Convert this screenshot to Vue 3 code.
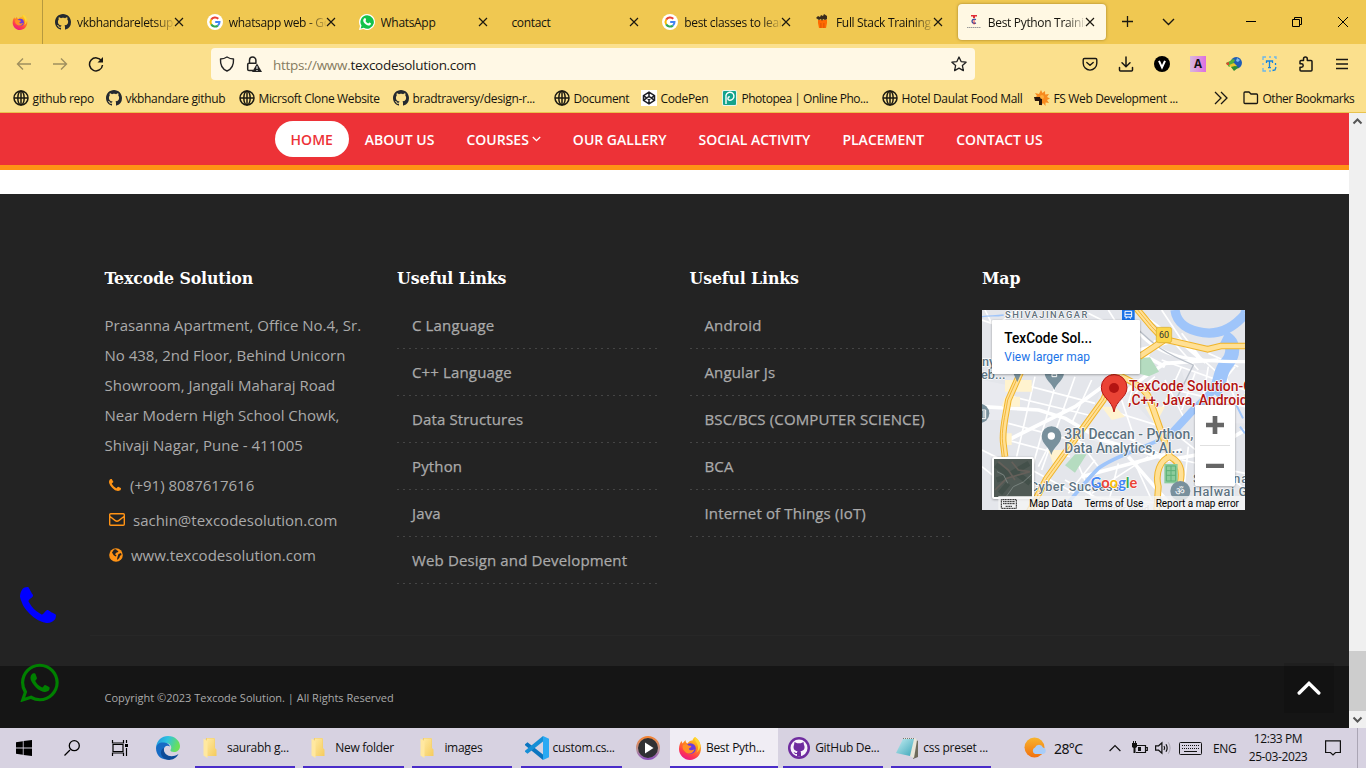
<script setup>
const tabs = [
  { icon: 'github', title: 'vkbhandareletsupgrade', fade: true },
  { icon: 'google', title: 'whatsapp web - Google', fade: true },
  { icon: 'whatsapp-app', title: 'WhatsApp' },
  { icon: '', title: 'contact' },
  { icon: 'google', title: 'best classes to learn full', fade: true },
  { icon: 'fullstack', title: 'Full Stack Training in', fade: true },
  { icon: 'texcode', title: 'Best Python Training', fade: true, active: true },
]
const tools = ['pocket', 'download', 'vee', 'letter-a', 'idm', 'text-scan', 'puzzle', 'menu']
const bookmarks = [
  { icon: 'globe', title: 'github repo' },
  { icon: 'github', title: 'vkbhandare github' },
  { icon: 'globe', title: 'Micrsoft Clone Website' },
  { icon: 'github', title: 'bradtraversy/design-r...' },
  { icon: 'globe', title: 'Document' },
  { icon: 'codepen', title: 'CodePen' },
  { icon: 'photopea', title: 'Photopea | Online Pho...' },
  { icon: 'globe', title: 'Hotel Daulat Food Mall' },
  { icon: 'spark', title: 'FS Web Development ...' },
]
const nav = ['HOME', 'ABOUT US', 'COURSES', 'OUR GALLERY', 'SOCIAL ACTIVITY', 'PLACEMENT', 'CONTACT US']
const linksA = ['C Language', 'C++ Language', 'Data Structures', 'Python', 'Java', 'Web Design and Development']
const linksB = ['Android', 'Angular Js', 'BSC/BCS (COMPUTER SCIENCE)', 'BCA', 'Internet of Things (IoT)']
const tasks = [
  { icon: 'folder-win', title: 'saurabh g...' },
  { icon: 'folder-win', title: 'New folder' },
  { icon: 'folder-win', title: 'images' },
  { icon: 'vscode', title: 'custom.cs...' },
  { icon: 'media', title: '' },
  { icon: 'firefox', title: 'Best Pyth...', active: true },
  { icon: 'ghdesktop', title: 'GitHub De...' },
  { icon: 'notepad', title: 'css preset ...' },
]
</script>

<template>
  <div class="screen">
    <svg class="defs" width="0" height="0" aria-hidden="true">
      <defs>
        <linearGradient id="ffg" x1=".8" y1="0" x2=".3" y2="1"><stop offset="0" stop-color="#ffe227" /><stop offset=".4" stop-color="#ff8a1c" /><stop offset=".75" stop-color="#ff3750" /><stop offset="1" stop-color="#e8178a" /></linearGradient>
        <linearGradient id="edgeg" x1="0" y1="0" x2="1" y2=".3"><stop offset="0" stop-color="#1d8fe0" /><stop offset=".5" stop-color="#2fc3df" /><stop offset="1" stop-color="#69e05a" /></linearGradient>
        <linearGradient id="foldg" x1="0" y1="0" x2="1" y2="1"><stop offset="0" stop-color="#ffeaa4" /><stop offset="1" stop-color="#f5cb5c" /></linearGradient>
        <linearGradient id="lag"><stop offset="0" stop-color="#d9b8dd" /><stop offset="1" stop-color="#dd6fe0" /></linearGradient>
        <linearGradient id="medg" x1="0" y1="0" x2="0" y2="1"><stop offset="0" stop-color="#f48332" /><stop offset=".6" stop-color="#b9939a" /><stop offset="1" stop-color="#8a4fb8" /></linearGradient>
        <linearGradient id="sung" x1="0" y1="0" x2="0" y2="1"><stop offset="0" stop-color="#f7b52e" /><stop offset="1" stop-color="#f2700f" /></linearGradient>
        <linearGradient id="ntg" x1="0" y1="0" x2="1" y2="1"><stop offset="0" stop-color="#c5eef2" /><stop offset="1" stop-color="#3ba5b9" /></linearGradient>
      </defs>
      <symbol id="github" viewBox="0 0 16 16"><path fill="#24292f" d="M8 0C3.58 0 0 3.58 0 8c0 3.54 2.29 6.53 5.47 7.59.4.07.55-.17.55-.38 0-.19-.01-.82-.01-1.49-2.01.37-2.53-.49-2.69-.94-.09-.23-.48-.94-.82-1.13-.28-.15-.68-.52-.01-.53.63-.01 1.08.58 1.23.82.72 1.21 1.87.87 2.33.66.07-.52.28-.87.51-1.07-1.78-.2-3.64-.89-3.64-3.95 0-.87.31-1.59.82-2.15-.08-.2-.36-1.02.08-2.12 0 0 .67-.21 2.2.82.64-.18 1.32-.27 2-.27s1.36.09 2 .27c1.53-1.04 2.2-.82 2.2-.82.44 1.1.16 1.92.08 2.12.51.56.82 1.27.82 2.15 0 3.07-1.87 3.75-3.65 3.95.29.25.54.73.54 1.48 0 1.07-.01 1.93-.01 2.2 0 .21.15.46.55.38A8.01 8.01 0 0 0 16 8c0-4.42-3.58-8-8-8z" /></symbol>
      <symbol id="google" viewBox="0 0 16 16"><circle cx="8" cy="8" r="8" fill="#fff" /><g fill="none" stroke-width="2"><path stroke="#ea4335" d="M4.2 5.6A4.6 4.6 0 0 1 11.3 4.7" /><path stroke="#fbbc05" d="M4.2 10.4a4.6 4.6 0 0 1 0-4.8" /><path stroke="#34a853" d="M4.2 10.4a4.6 4.6 0 0 0 6.7 1.2" /><path stroke="#4285f4" d="M8.2 8.1h4.3a4.6 4.6 0 0 1-1.6 3.5" /></g></symbol>
      <symbol id="whatsapp-app" viewBox="0 0 16 16"><path fill="#fff" d="M8 0a8 8 0 1 1-3.7 15.100L0 16l1-4.100A8 8 0 0 1 8 0z" /><path fill="#12c24a" d="M8.100 1.300a6.700 6.700 0 1 1-3.300 12.500l-3.100.800.8-3A6.700 6.700 0 0 1 8.100 1.300z" /><path fill="#fff" d="M5.500 4.300c.8-.5 1.100 0 1.600 1.400.1.500-.6.900-.6 1.200.6 1.200 1.500 2 2.700 2.600.5 0 .8-1.100 1.300-.9 1.600.7 1.600.9 1.300 1.600-.5 1.100-2 1.500-3.300 1-2.300-.8-3.600-2.300-4.200-4-.3-1.100.2-2.200 1.200-2.900z" /></symbol>
      <symbol id="fullstack" viewBox="0 0 16 16"><path fill="#ff6a00" d="M4 6h8l1-1v4l-1 5H5L4 9z" /><path fill="#3a2c1c" d="M2 4l2-2 2 1 1-2 2 1 1-2 3 2v3l-2 1-2-1-1 2-1-2-2 1z" /><path fill="#d84b00" d="M6.500 9h.8v5h-.8zM9.500 9h.8v5h-.8z" /></symbol>
      <symbol id="texcode" viewBox="0 0 16 16"><path fill="#e22d35" d="M5 1h6v1.500H9V4H7V2.500H5z" /><path d="M9.800 5.700A2.200 2.200 0 1 0 9.800 8.800" fill="none" stroke="#3c4a9c" stroke-width="1.300" /><path fill="#e22d35" d="M7.600 6h.9v4.500h-.9z" /><path d="M1 13.500h14" stroke="#999" stroke-dasharray="1.500 .5" /></symbol>
      <symbol id="firefox" viewBox="0 0 24 24"><path fill="url(#ffg)" d="M17 1c4 3 6 7 6 11.500C23 19 18 24 12 24S1 19 1 13c0-4 1.500-6.500 2.500-8l1 2.500L7.500 4c0 2 .8 3 2 3.500C11 5 13 4 14.500 4.500 15 2.500 16 1.500 17 1z" /><circle cx="12.500" cy="12.500" r="5.300" fill="#6b3bdc" /><path fill="#ff8f25" d="M5 9c2-1 4-.8 5.500.5 1.500.2 3 .3 2.800 1.200-.3 1-2.300 1-2.300 2 0 1.500 3 2.500 5.500.5-1 3.500-4 4.800-7 4C6 16 3.500 12 5 9z" /><path fill="#ffd637" d="M17 1c-1 4 2.500 5 3 10 .3 3-1 5-2 6 6-4 6-12-1-16z" /></symbol>
      <symbol id="globe" viewBox="0 0 16 16"><g fill="none" stroke="#1c1a12" stroke-width="1.500"><circle cx="8" cy="8" r="7" /><ellipse cx="8" cy="8" rx="3.200" ry="7" /><path d="M1 8h14M8 1v14" /></g></symbol>
      <symbol id="codepen" viewBox="0 0 16 16"><path fill="#fff" d="M0 0h16v16H0z" /><path d="M8 2.200l5.500 3.500v4.600L8 13.800l-5.500-3.500V5.700zM2.500 5.700L8 9.500l5.500-3.800M2.500 10.300L8 6.500l5.500 3.800M8 2.200v4.300M8 9.500v4.300" fill="none" stroke="#1e1f26" stroke-width="1.500" /></symbol>
      <symbol id="photopea" viewBox="0 0 16 16"><rect x="0" y="0" width="15" height="16" rx="2" fill="#e6f5ee" /><rect x="1" y="1" width="13" height="14" rx="1" fill="#14a38c" /><path d="M4 14V7a4 4 0 1 1 4 3.200c-3 0-2.500-3.500-.2-3.500" fill="none" stroke="#fff" stroke-width="1.400" /></symbol>
      <symbol id="spark" viewBox="0 0 16 16"><path fill="#f78b1f" d="M7 0l1.500 3L11 1l.2 3.500L15 4l-2 3 3 1.500-3 1.500 2 3-3.500-.5V16L9 13l-2 3-1-8H0l3-2L1 3l4 1z" /><path fill="#27170e" d="M0 7h8v8H5v-4H1z" /><circle cx="8" cy="7" r="2" fill="#ffad3a" /></symbol>
      <symbol id="pocket" viewBox="0 0 16 16"><g fill="none" stroke="#191713" stroke-width="1.400" stroke-linecap="round" stroke-linejoin="round"><path d="M2.500 2.500h11q1.300 0 1.300 1.300v3.500a6.800 6.800 0 0 1-13.600 0V3.800q0-1.300 1.300-1.300z" /><path d="M4.800 6.500L8 9.300l3.200-2.800" /></g></symbol>
      <symbol id="download" viewBox="0 0 16 16"><path d="M8 1v9.500M4 6.800l4 4 4-4M1.500 11.500V14q0 1 1 1h11q1 0 1-1v-2.500" fill="none" stroke="#191713" stroke-width="1.500" stroke-linecap="round" /></symbol>
      <symbol id="vee" viewBox="0 0 16 16"><circle cx="8" cy="8" r="8" fill="#000" /><path d="M5 4.800l3 6.500 3-6.500" fill="none" stroke="#fff" stroke-width="2" /></symbol>
      <symbol id="letter-a" viewBox="0 0 16 16"><path fill="url(#lag)" d="M0 0h16v16H0z" /><text x="8" y="12.200" text-anchor="middle" font-family="Open Sans, sans-serif" font-weight="700" font-size="11.500" fill="#111">A</text></symbol>
      <symbol id="idm" viewBox="0 0 16 16"><circle cx="10.200" cy="6.800" r="5.800" fill="#1e5cb5" /><path fill="#7fb8ee" d="M11 2l3 2-2 2-2-1z" /><path fill="#4faf3b" d="M0 7l4-2 3-2 2 1-2 4-4 3z" /><path fill="#eac52c" d="M3 9l5-2 3 3-4 3z" /><path fill="#2d8c32" d="M5 11l4-1 4 1-5 4z" /><path fill="#d84a2d" d="M0 7l3-1v3H1z" /></symbol>
      <symbol id="text-scan" viewBox="0 0 16 16"><g fill="none" stroke="#6bb6ea" stroke-width="1.300"><path d="M1 4V1h3M7 1h2M12 1h2v2M1 12v3h3M1 7v2M7 15h2" /><path stroke="#1583de" d="M4.500 7V5h6v2M7.500 5v7M6 11.700h3M10.500 14.500l2.500-.5 1-3M13.500 9V7" /></g></symbol>
      <symbol id="puzzle" viewBox="0 0 16 16"><path d="M5.500 4.500V3a1.900 1.900 0 0 1 3.800 0v1.500H13q1 0 1 1V14q0 1-1 1H3q-1 0-1-1v-2.800h1.500a1.700 1.700 0 0 0 0-3.400H2V5.500q0-1 1-1z" fill="none" stroke="#191713" stroke-width="1.500" stroke-linejoin="round" /></symbol>
      <symbol id="menu" viewBox="0 0 16 16"><path d="M2 3.500h12M2 8h12M2 12.500h12" stroke="#191713" stroke-width="1.400" /></symbol>
      <symbol id="fa-phone" viewBox="0 128 1408 1408"><path fill="currentColor" d="M1408 1240q0 27-10 70.500t-21 68.500q-21 50-122 106-94 51-186 51-27 0-53-3.500t-57.500-12.500-47-14.500-55.500-20.500-49-18q-98-35-175-83-127-79-264-216t-216-264q-48-77-83-175-3-9-18-49t-20.500-55.500-14.500-47-12.500-57.500-3.500-53q0-92 51-186 56-101 106-122 25-11 68.500-21t70.500-10q14 0 21 3 18 6 53 76 11 19 30 54t35 63.500 31 53.500q3 4 17.500 25t21.500 35.500 7 28.500q0 20-28.500 50t-62 55-62 53-28.500 46q0 9 5 22.500t8.500 20.500 14 24 11.500 19q76 137 174 235t235 174q2 1 19 11.500t24 14 20.500 8.500 22.500 5q18 0 46-28.500t53-62 55-62 50-28.500q14 0 28.500 7t35.500 21.500 25 17.500q25 15 53.500 31t63.500 35 54 30q70 35 76 53 3 7 3 21z" /></symbol>
      <symbol id="fa-whatsapp" viewBox="0 0 1536 1560"><path fill="currentColor" d="M985 878q13 0 97.500 44t89.500 53q2 5 2 15 0 33-17 76-16 39-71 65.500t-102 26.500q-57 0-190-62-98-45-170-118t-148-185q-72-107-71-194v-8q3-91 74-158 24-22 52-22 6 0 18 1.500t19 1.500q19 0 26.500 6.500t15.500 27.500q8 20 33 88t25 75q0 21-34.500 57.500t-34.500 46.500q0 7 5 15 34 73 102 137 56 53 151 101 12 7 22 7 15 0 54-48.500t52-48.500zm-203 530q127 0 243.500-50t200.500-134 134-200.500 50-243.500-50-243.500-134-200.500-200.500-134-243.500-50-243.500 50-200.500 134-134 200.500-50 243.500q0 203 120 368l-79 233 242-77q158 104 345 104zm0-1382q153 0 292.500 60t240.500 161 161 240.500 60 292.500-60 292.500-161 240.500-240.500 161-292.500 60q-195 0-365-94l-417 134 136-405q-108-178-108-389 0-153 60-292.500t161-240.500 240.500-161 292.500-60z" /></symbol>
      <symbol id="folder-win" viewBox="0 0 24 24"><path fill="#f3cf6c" d="M7 2h8l1 1v17H6z" /><path fill="url(#foldg)" d="M8 2.500h7.500v9l2 2V20H7z" /><path fill="#ffe8a0" d="M4.500 2.500l4 2.500v17l-4-2.500z" /></symbol>
      <symbol id="vscode" viewBox="0 0 24 24"><path fill="#0b75c0" d="M0 8.200l2.500-2L18 18.500V24L0 9.300z" /><path fill="#168fd6" d="M0 15.800l2.500 2L18 5.500V0L0 14.700z" /><path fill="#2aa9f3" d="M18 0l6 2.700v18.600L18 24z" /></symbol>
      <symbol id="media" viewBox="0 0 24 24"><circle cx="12" cy="12" r="11" fill="#303033" stroke="url(#medg)" stroke-width="2" /><path fill="#fff" d="M9 6.500l8.500 5.500L9 17.500z" /></symbol>
      <symbol id="ghdesktop" viewBox="0 0 24 24"><circle cx="12" cy="12" r="11" fill="#6f2c9f" /><circle cx="12" cy="12" r="8.500" fill="#f8f3fb" /><path fill="#6f2c9f" d="M7.500 6l2.700 1.300h3.600L16.500 6l.5 3c1.500 3 0 6-3.500 6.300.7.700.5 2 .5 5.200h-4v-2.500c-2 .5-2.500-.8-3.500-2 1.500 0 2 1.500 3.500 1 0-1 .2-1.200.7-1.700C7.200 15 5.700 12 7 9z" /></symbol>
      <symbol id="notepad" viewBox="0 0 24 24"><path fill="#6e6a5c" d="M20 3l3 2v16l-5 2z" /><path fill="#e9e6da" d="M8 2h12l2 2-3 18-4-2z" /><path fill="url(#ntg)" d="M8 3h11l-4 17L1 17z" /><path d="M8 2.500h12" stroke="#777" stroke-dasharray="1 1" /></symbol>
    </svg>

    <header class="tabbar">
      <div class="pinned"><svg width="16" height="16"><use href="#firefox" /></svg></div>
      <div class="tabs">
        <div v-for="(t, i) in tabs" :key="i" class="tab" :class="{ active: t.active }">
          <svg v-if="t.icon" class="fav" width="16" height="16"><use :href="'#' + t.icon" /></svg>
          <span class="title" :class="{ fade: t.fade, wide: !t.icon }">{{ t.title }}</span>
          <svg class="x" width="10" height="10" viewBox="0 0 10 10"><path d="M1 1l8 8M9 1L1 9" stroke="#1b1810" stroke-width="1.150" /></svg>
        </div>
      </div>
      <div class="tabtools">
        <svg width="14" height="14" viewBox="0 0 14 14"><path d="M6.500 1v11M1 6.500h11" stroke="#1b1810" stroke-width="1.300" /></svg>
        <svg width="14" height="14" viewBox="0 0 14 14"><path d="M1 4l5.500 5.500L12 4" fill="none" stroke="#1b1810" stroke-width="1.400" /></svg>
      </div>
      <div class="wincontrols">
        <svg width="10" height="10" viewBox="0 0 10 10"><path d="M0 4.500h10" stroke="#000" /></svg>
        <svg width="10" height="10" viewBox="0 0 10 10"><path d="M.5 2.500h7v7h-7zM2.500 2.500v-2h7v7h-2" fill="none" stroke="#000" /></svg>
        <svg width="10" height="10" viewBox="0 0 10 10"><path d="M0 0l10 10M10 0L0 10" stroke="#000" /></svg>
      </div>
    </header>

    <div class="toolbar">
      <div class="history">
        <svg width="16" height="16" viewBox="0 0 16 16"><path d="M15 8H1.500M7 2.500L1.500 8 7 13.500" fill="none" stroke="#9f8f5e" stroke-width="1.400" /></svg>
        <svg width="16" height="16" viewBox="0 0 16 16"><path d="M1 8h13.500M9 2.500L14.500 8 9 13.500" fill="none" stroke="#9f8f5e" stroke-width="1.400" /></svg>
        <svg width="16" height="16" viewBox="0 0 16 16"><path d="M13.600 5A6.500 6.500 0 1 0 14.500 9" fill="none" stroke="#191713" stroke-width="1.500" /><path fill="#191713" d="M15 1v5.500H9.500z" /></svg>
      </div>
      <div class="urlbar">
        <svg width="16" height="16" viewBox="0 0 16 16"><path d="M8 1c2 1.300 4 2 6.500 2 .3 5-1.500 10-6.500 12C3 13 1.200 8 1.500 3 4 3 6 2.300 8 1z" fill="none" stroke="#222" stroke-width="1.400" stroke-linejoin="round" /></svg>
        <svg class="lock" width="16" height="16" viewBox="0 0 16 16"><path d="M7 14.500H3q-1.300 0-1.300-1.300V8.500q0-1.300 1.300-1.300h7.500M3.500 7V4.200a3.200 3.200 0 0 1 6.400 0V7" fill="none" stroke="#222" stroke-width="1.500" /><path fill="#222" d="M11 7.500l5 8.500H6z" /><path d="M11 10.200v2.800M11 14v1" stroke="#fff" stroke-width="1.100" /></svg>
        <span class="url"><span class="dim">https://www.</span>texcodesolution.com</span>
        <svg class="star" width="16" height="16" viewBox="0 0 16 16"><path d="M8 1l2.100 4.600 5 .6-3.700 3.400 1 5L8 12.100l-4.400 2.500 1-5L.9 6.200l5-.6z" fill="none" stroke="#222" stroke-width="1.300" stroke-linejoin="round" /></svg>
      </div>
      <div class="tools">
        <span v-for="t in tools" :key="t"><svg width="16" height="16"><use :href="'#' + t" /></svg></span>
      </div>
    </div>

    <div class="bookmarks">
      <div v-for="b in bookmarks" :key="b.title" class="bm"><svg width="16" height="16"><use :href="'#' + b.icon" /></svg><span>{{ b.title }}</span></div>
      <div class="bm"><svg width="16" height="16" viewBox="0 0 16 16"><path d="M2 2l6 6-6 6M8 2l6 6-6 6" fill="none" stroke="#191713" stroke-width="1.300" /></svg></div>
      <div class="bm"><svg width="16" height="16" viewBox="0 0 16 16"><path d="M1 12.500V3q0-1 1-1h4l2 2h5.500q1 0 1 1v7.500q0 1-1 1H2q-1 0-1-1z" fill="none" stroke="#191713" stroke-width="1.300" /></svg><span>Other Bookmarks</span></div>
    </div>

    <div class="viewport">
      <main class="page">
        <nav class="sitenav">
          <a v-for="(n, i) in nav" :key="n" :class="{ current: i === 0 }">{{ n }}<svg v-if="n === 'COURSES'" width="9" height="6" viewBox="0 0 9 6"><path d="M.8 1l3.700 3.600L8.200 1" fill="none" stroke="#fff" stroke-width="1.300" /></svg></a>
        </nav>
        <section class="footer">
          <div class="col">
            <h3>Texcode Solution</h3>
            <p>Prasanna Apartment, Office No.4, Sr.<br>No 438, 2nd Floor, Behind Unicorn<br>Showroom, Jangali Maharaj Road<br>Near Modern High School Chowk,<br>Shivaji Nagar, Pune - 411005</p>
            <div class="contact"><svg width="12" height="12"><use href="#fa-phone" /></svg><span class="c1">(+91) 8087617616</span></div>
            <div class="contact"><svg width="16" height="13" viewBox="0 0 16 13"><path d="M1.700.7h12.600q1 0 1 1v9.600q0 1-1 1H1.700q-1 0-1-1V1.700q0-1 1-1zM.7 3.200l5.600 4.400q1.700 1.300 3.400 0l5.600-4.400" fill="none" stroke="currentColor" stroke-width="1.400" /></svg><span class="c2">sachin@texcodesolution.com</span></div>
            <div class="contact"><svg width="14" height="14" viewBox="0 0 14 14"><circle cx="7" cy="7" r="6.800" fill="currentColor" /><path fill="#232323" d="M5 1.500l2-.3 1 1.300 1.500.5-.8 1.300-1.500.5L6 6.300l1.500 1.200-.8.900-2-1.200L3 4.500zM9.500 6l2.500-1 .5 2-1.500.8-.6 2-1.800 2-.6-.6.5-2.200z" /></svg><span class="c3">www.texcodesolution.com</span></div>
          </div>
          <div class="col">
            <h3>Useful Links</h3>
            <ul><li v-for="l in linksA" :key="l">{{ l }}</li></ul>
          </div>
          <div class="col">
            <h3>Useful Links</h3>
            <ul><li v-for="l in linksB" :key="l">{{ l }}</li></ul>
          </div>
          <div class="col">
            <h3>Map</h3>
            <svg class="map" width="263" height="200" viewBox="21 30 789 600">
              <path fill="#e4e6eb" d="M21 30h789v600H21z" />
              <g fill="#e9eaef"><path d="M400 220l160 180-60 70-180-60zM21 240l100 20-20 100H21zM620 210h190v160H660z" /></g>
              <g fill="none" stroke="#fff" stroke-width="5">
                <path d="M130 250l230 60M110 290l230 55M100 370l230 60M95 420l190 50M180 230l-55 240M240 260l-70 250M300 230l-100 280M350 240l-60 130M21 450l120 60M21 500l100 80M170 510l130 70M230 420l-40 80M310 420l60 80M430 400l120 60M400 330l160 50M440 300l40 120M480 240l-20 70M540 230l-60 50M570 240l60 120M620 200l-60 130M660 220l-40 110M700 200l-20 120M740 200l50 120M780 200l-80 100M560 260l250 60M560 180l250 90M300 470l50 120M360 480l-80 100M430 490l-30 120M480 490l50 110M520 470l-170 110M620 480l190 40M640 440l-20 190M600 400l200 160M21 60l120 40M30 30l20 40M130 30l-60 40M340 40l120 60M400 30l50 80M540 120l-30 70M590 120l80 90M640 140l90 80M700 160l90 40M500 40l80 60M560 30l60 90M620 100l70 90M270 540l160 90M330 590l230 20" />
                <path stroke-width="11" d="M21 320l170 10 80 25 110 65 140 40 60 20 110-20 119-70M420 300l90-70 60-40 160-10M100 420l200-100 110-80M495 160l75 40M460 470l140 160M320 530l300-80" />
              </g>
              <g fill="#fff3cf"><path d="M90 290h45v30H80zM75 400h35v35H75zM380 320h40l30 30-40 10zM510 320h60l-30 55zM90 240h80v35H90zM220 450h50l-30 60z" /></g>
              <g fill="#b5dcc0"><path d="M490 175l35-3 27 43-30 14-30-8zM300 463h35l-35 55-30-22z" /></g>
              <g fill="none" stroke="#9fc5fa">
                <path stroke-width="28" d="M600 30c5 40 40 62 85 68 50 7 90-15 125-55" /><path stroke-width="42" d="M745 110c40 20 28 60 10 80-25 30-15 60-40 90" /><path stroke-width="23" d="M715 270c-25 30-40 40-65 65l-60 65" /><path stroke-width="11" d="M590 400c-60 40-160 60-220 105-35 35-70 80-110 125M800 30l10 10" /><path stroke-width="6" d="M784 315l20 40M795 380l15 20" />
                <path stroke-width="4" d="M21 50c25-5 35 0 65-5" />
              </g>
              <path d="M495 100c60 70 140 85 315 85M450 160l160-40 70 60" fill="none" stroke="#fff" stroke-width="10" /><path d="M470 70c70 70 100 90 185 125l-55 110" fill="none" stroke="#b9bfc8" stroke-width="4" />
              <path d="M140 210l-40 90c-8 50-20 90-15 130l5 40M480 20l50 60 38 40-75 50M568 118l130 30 40-10h75M420 220L385 300 215 535 160 640M420 220c50 25 90 40 105 80l60 170c30 15 40 40 30 80M585 470c-30 10-45 50-35 90l-5 70" fill="none" stroke="#f0b42a" stroke-width="20" stroke-linejoin="round" />
              <path d="M140 210l-40 90c-8 50-20 90-15 130l5 40M480 20l50 60 38 40-75 50M568 118l130 30 40-10h75M420 220L385 300 215 535 160 640M420 220c50 25 90 40 105 80l60 170c30 15 40 40 30 80M585 470c-30 10-45 50-35 90l-5 70" fill="none" stroke="#ffe095" stroke-width="14" stroke-linejoin="round" />
              <g fill="none" stroke="#efad26" stroke-width="2.500"><path d="M138 210l-40 90c-8 50-20 90-15 130l5 40M420 220L385 300 215 535 160 640M480 20l50 60 38 40" /></g>
              <path fill="#8ccc9c" d="M568 492h40v58h-40z" /><path d="M574 498h28v45h-28zM574 512h28M574 526h28M588 498v45" fill="none" stroke="#5daf78" stroke-width="3" />
              <g class="maplabel">
                <text x="90" y="54" font-size="28" textLength="247" fill="#63717c">SHIVAJINAGAR</text>
                <text x="21" y="198" font-size="38" fill="#607686">ny</text><text x="18" y="238" font-size="38" fill="#607686">eb...</text>
                <text x="462" y="274" font-size="42" textLength="370" lengthAdjust="spacingAndGlyphs" fill="#b31412">TexCode Solution-C</text>
                <text x="460" y="316" font-size="42" textLength="358" lengthAdjust="spacingAndGlyphs" fill="#b31412">,C++, Java, Android</text>
                <text x="268" y="417" font-size="42" textLength="387" lengthAdjust="spacingAndGlyphs" fill="#5d7382">3RI Deccan - Python,</text>
                <text x="268" y="459" font-size="42" textLength="356" lengthAdjust="spacingAndGlyphs" fill="#5d7382">Data Analytics, AI...</text>
                <text x="164" y="572" font-size="38" textLength="270" fill="#5d7382">Cyber Success</text>
                <text x="654" y="548" font-size="38" textLength="165" fill="#5d7382">Sadhana</text>
                <text x="654" y="588" font-size="38" textLength="162" fill="#5d7382">Halwai G</text>
                <text x="350" y="636" font-size="27" fill="#a0a5ac">K Kumar Road</text>
              </g>
              <g fill="#78909c"><path d="M127 246l-16-35h32zM238 270c-7-22-29-30-29-52h58c0 22-22 30-29 52zM229 465c-7-27-29-32-29-57a29.500 29.500 0 0 1 59 0c0 25-23 30-30 57z" /><circle cx="14" cy="340" r="29" /><circle cx="616" cy="573" r="30" /></g>
              <circle cx="229" cy="408" r="11" fill="#fff" /><path d="M231 222h14v8h-14zM21 330h11v26H21M27 333v20" fill="none" stroke="#fff" stroke-width="3" />
              <text x="616" y="586" text-anchor="middle" font-size="32" fill="#fff" font-family="DejaVu Sans, sans-serif">ॐ</text>
              <path d="M417 336c-6-37-38-42-38-74a38.500 38.500 0 0 1 77 0c0 32-33 37-39 74z" fill="#ea4335" stroke="#b31412" stroke-width="3" /><circle cx="417" cy="264" r="15" fill="#b31412" />
              <path d="M441 30h38v32h-38z" fill="#1a73e8" /><path d="M450 34h20v17h-20zM450 43h20M453 56l3-5M467 56l-3-5" fill="none" stroke="#fff" stroke-width="3" />
              <rect x="544" y="82" width="46" height="46" rx="7" fill="#fbd54a" stroke="#d8a928" stroke-width="2" /><text x="567" y="114" class="roboto" text-anchor="middle" font-size="27" fill="#333">60</text>
              <rect x="51" y="60" width="444" height="162" rx="3" fill="#fff" class="shadow" />
              <text x="88" y="129" class="roboto" font-size="42" font-weight="500" textLength="263" lengthAdjust="spacingAndGlyphs" fill="#000">TexCode Sol...</text>
              <text x="88" y="182" class="roboto" font-size="36" textLength="257" lengthAdjust="spacingAndGlyphs" fill="#1a73e8">View larger map</text>
              <rect x="660" y="315" width="120" height="243" rx="4" fill="#fff" class="shadow" />
              <path fill="#666" d="M713 348h14v20h20v14h-20v20h-14v-20h-20v-14h20zM693 491h54v13h-54z" /><path fill="#e0e0e0" d="M675 435h90v3h-90z" />
              <rect x="54" y="474" width="120" height="120" rx="3" fill="#505a55" stroke="#fff" stroke-width="6" class="shadow" />
              <g fill="none"><path stroke="#43504a" stroke-width="16" d="M62 495l40 30 60-35M65 540l60-20 40 30M75 580l25-30" /><path stroke="#65605a" stroke-width="5" d="M70 485l30 25 20 30M110 485l20 25 35 5M60 570l35-35 70-20" /><path stroke="#78827e" stroke-width="3" d="M95 588l20-28 30-14 24-22M66 515l20 10 12 25" /></g>
              <text class="glogo" x="347" y="565" font-size="45" stroke="#fff" stroke-width="3" paint-order="stroke" textLength="140" lengthAdjust="spacingAndGlyphs"><tspan fill="#4285f4">G</tspan><tspan fill="#ea4335">o</tspan><tspan fill="#fbbc05">o</tspan><tspan fill="#4285f4">g</tspan><tspan fill="#34a853">l</tspan><tspan fill="#ea4335">e</tspan></text>
              <path fill="#f5f5f5" fill-opacity=".78" d="M70 588h740v42H70z" />
              <path d="M79 599h45v26H79zM84 605h36M84 611h36M92 619h20" fill="none" stroke="#222" stroke-width="3" stroke-dasharray="4 1" />
              <g class="roboto" font-size="30" fill="#000"><text x="163" y="621" textLength="129" lengthAdjust="spacingAndGlyphs">Map Data</text><text x="329" y="621" textLength="176" lengthAdjust="spacingAndGlyphs">Terms of Use</text><text x="542" y="621" textLength="250" lengthAdjust="spacingAndGlyphs">Report a map error</text></g>
            </svg>
          </div>
        </section>
        <section class="copyright">Copyright ©2023 Texcode Solution. | All Rights Reserved</section>
        <svg class="float call" width="36" height="36"><use href="#fa-phone" /></svg>
        <svg class="float chat" width="39" height="39"><use href="#fa-whatsapp" /></svg>
        <div class="totop"><svg width="24" height="14" viewBox="0 0 24 14"><path d="M2.200 12L12 2.400 21.800 12" fill="none" stroke="#fff" stroke-width="3.400" stroke-linecap="round" /></svg></div>
      </main>
      <aside class="scroll">
        <svg width="17" height="17" viewBox="0 0 17 17"><path d="M4.500 10.500l4-4 4 4" fill="none" stroke="#555" stroke-width="2" /></svg>
        <div class="track"><div class="thumb"></div></div>
        <svg width="17" height="17" viewBox="0 0 17 17"><path d="M4.500 6.500l4 4 4-4" fill="none" stroke="#555" stroke-width="2" /></svg>
      </aside>
    </div>

    <footer class="taskbar">
      <div class="launch"><svg width="16" height="16" viewBox="0 0 16 16"><path d="M0 2.200l6.800-1v6.400H0zM7.600 1.100L16 0v7.600H7.600zM0 8.400h6.800v6.400l-6.800-1zM7.600 8.400H16V16l-8.400-1.100z" /></svg></div>
      <div class="launch"><svg width="16" height="16" viewBox="0 0 16 16"><path d="M.5 15.500L6 10" stroke="#000" stroke-width="1.300" /><circle cx="10.300" cy="5.700" r="5" fill="none" stroke="#000" stroke-width="1.300" /></svg></div>
      <div class="launch"><svg width="18" height="16" viewBox="0 0 18 16"><path d="M1.500 0v3h11V0M2 4.500h10v7H2zM1.500 16v-3h11v3M15.500 0v3M15.500 8v8" fill="none" stroke="#000" stroke-width="1.200" /><path d="M14 4h3v3h-3z" /></svg></div>
      <div class="launch"><svg width="24" height="24" viewBox="0 0 24 24"><path fill="url(#edgeg)" d="M0 12C.5 4 6 0 12 0c7 0 12 5 12 10 0 4-3 6-6 6-2.500 0-4-.8-3.500-2 2-3 0-7-5-7C5 7 1 9 0 12z" /><path fill="#166bc4" d="M0 12c.5-4 4-6 8-5.500 4 .4 5.500 2.500 6 4-4-2-7 1-6 5 .8 4 5 6.500 9 6C11 26 0 23 0 12z" /><path fill="#0d4b98" d="M8 12c-1.500 7 7 11 14.500 6C17 28 4 24 5 16c.3-2 1.500-3.500 3-4z" /></svg></div>
      <div class="tasks">
        <div v-for="(t, i) in tasks" :key="i" class="task" :class="{ active: t.active, bare: !t.title }"><svg width="24" height="24"><use :href="'#' + t.icon" /></svg><span>{{ t.title }}</span></div>
      </div>
      <div class="tray">
        <svg width="24" height="22" viewBox="0 0 24 22"><circle cx="10.500" cy="10.500" r="10" fill="url(#sung)" /><path fill="#a9cdf8" d="M11 17a3.500 3.500 0 0 1 0-6.500 4.300 4.300 0 0 1 8 0 3.300 3.300 0 0 1 0 6.500z" /></svg>
        <span class="temp">28°C</span>
        <svg width="12" height="8" viewBox="0 0 12 8"><path d="M.6 7L6 1.600 11.400 7" fill="none" stroke="#111" stroke-width="1.200" /></svg>
        <svg width="17" height="14" viewBox="0 0 17 14"><path d="M5.500 4.500h9v7H5M15 6.500h1.300v3H15" fill="none" stroke="#111" stroke-width="1.200" /><path d="M7 6h3v4H7zM1 2h5v4L4.500 7v5h-2V7L1 6z" fill="#111" /><path d="M2.500 0v2M4.500 0v2" stroke="#111" /></svg>
        <svg width="17" height="14" viewBox="0 0 17 14"><path d="M.6 4.800h3l3.300-3v10.400l-3.300-3h-3zM9 5q1.300 2 0 4M11 3.200q2.300 3.800 0 7.600" fill="none" stroke="#111" stroke-width="1.200" /><path d="M13.300 1.300q3.600 5.700 0 11.400" fill="none" stroke="#aaa6b2" /></svg>
        <svg width="23" height="13" viewBox="0 0 23 13"><rect x=".5" y=".5" width="22" height="12" rx="1" fill="none" stroke="#111" /><path d="M3 3.500h17M3 6.500h17" stroke="#111" stroke-dasharray="1 1" /><path d="M5 9.500h13" stroke="#111" /></svg>
        <span class="lang">ENG</span>
        <span class="clock"><span>12:33 PM</span><span class="date">25-03-2023</span></span>
        <svg width="16" height="16" viewBox="0 0 16 16"><path d="M.6.8h14.800v11.700h-4.900L8 15l-2.500-2.500H.6z" fill="none" stroke="#111" stroke-width="1.200" /></svg>
      </div>
      <div class="peek"></div>
    </footer>
  </div>
</template>

<style>
html, body { margin: 0; overflow: hidden; }
</style>

<style scoped>
.screen { width: 1366px; height: 768px; position: relative; display: flex; flex-direction: column; overflow: hidden; font-family: "Open Sans", "Noto Sans", sans-serif; font-size: 12px; color: #15130c; }
.screen * { box-sizing: border-box; }
svg { display: block; flex: none; }
.defs { position: absolute; }
.tabbar { height: 44px; background: #f0c851; display: flex; align-items: center; flex: none; }
.pinned { width: 43px; height: 44px; border-right: 1px solid #b6993f; display: flex; align-items: center; padding-left: 12px; }
.tabs { display: flex; gap: 3.800px; padding-left: 4px; }
.tab { width: 148px; height: 36px; border-radius: 4px; display: flex; align-items: center; padding-left: 8px; }
.tab.active { background: #fff8e3; box-shadow: 0 0 3px rgba(90, 65, 0, .55); }
.title { margin-left: 6px; width: 97px; white-space: nowrap; overflow: hidden; letter-spacing: -.32px; line-height: 18px; padding-top: 1px; }
.title.wide { margin-left: 0; width: 119px; padding-left: 1px; }
.title.fade { mask-image: linear-gradient(90deg, #000 80%, transparent 102%); }
.tabtools { display: flex; gap: 27px; margin-left: 15px; }
.wincontrols { display: flex; gap: 36px; margin-left: auto; padding-right: 18px; }
.toolbar { height: 40px; background: #fbe08d; display: flex; align-items: center; flex: none; }
.history { width: 211px; display: flex; gap: 20px; padding-left: 16px; }
.urlbar { width: 764px; height: 32px; border-radius: 4px; background: #fff8e5; display: flex; align-items: center; padding: 0 8px; }
.lock { margin-left: 11px; }
.url { font-size: 13.500px; letter-spacing: -.3px; margin-left: 11px; color: #1b1a16; padding-top: 2px; }
.dim { color: #857b60; }
.star { margin-left: auto; }
.tools { display: flex; margin-left: auto; padding-right: 6px; }
.tools span { width: 36px; display: flex; justify-content: center; }
.bookmarks { height: 29px; background: #fbe08d; border-bottom: 1px solid #e9c34d; display: grid; grid-template-columns: 93px 133px 154px 161px 87px 81px 160px 152px 179px 30px auto; align-items: center; padding-left: 13px; flex: none; }
.bm { display: flex; gap: 3.500px; align-items: center; white-space: nowrap; letter-spacing: -.35px; }
.bm:nth-child(7), .bm:last-child { letter-spacing: -.48px; }
.bm:nth-child(8) { letter-spacing: -.3px; }
.viewport { height: 615px; display: flex; flex: none; }
.page { width: 1349px; position: relative; background: #fff; }
.sitenav { height: 57px; background: #ed3237; border-bottom: 5px solid #ff9315; display: flex; align-items: center; padding: 0 0 0 274.600px; font-size: 14px; font-weight: 600; color: #fff; }
.sitenav a { height: 36px; padding: 0 16px; display: flex; align-items: center; gap: 3px; white-space: nowrap; border-radius: 18px; }
.sitenav .current { background: #fff; color: #ed3237; }
.footer { margin-top: 24px; height: 472px; background: linear-gradient(#272727, #272727) 90px 441px / 1170px 1px no-repeat #232323; display: grid; grid-template-columns: repeat(4, 263px); column-gap: 29.500px; padding: 68px 0 0 104.500px; align-content: start; }
h3 { margin: 0; height: 40px; line-height: 32px; font-family: "Roboto Slab", "DejaVu Serif", serif; font-stretch: condensed; font-size: 17.500px; font-weight: 700; color: #fff; letter-spacing: -.1px; white-space: nowrap; }
.col { color: #aaa; font-size: 15px; }
p { margin: 8px 0 7px; line-height: 30px; white-space: nowrap; }
.contact { height: 35px; display: flex; align-items: center; padding-left: 4.500px; color: #ff9315; }
.contact span { color: #aaa; margin-left: 8px; }
.contact .c1 { margin-left: 9px; }
ul { margin: 0; padding: 0; list-style: none; }
li { height: 47px; padding: 0 0 0 15px; line-height: 46px; letter-spacing: .14px; -webkit-text-stroke: .25px #aaa; background: repeating-linear-gradient(90deg, #454545 0 2px, transparent 2px 6px) 0 46px / 100% 1px no-repeat; white-space: nowrap; }
.map { margin-top: 8px; }
.maplabel { font-family: Roboto, sans-serif; font-weight: 500; paint-order: stroke; stroke: #fff; stroke-width: 4px; stroke-linejoin: round; }
.roboto { font-family: Roboto, sans-serif; }
.glogo { font-family: Lato, sans-serif; font-weight: 700; }
.shadow { filter: drop-shadow(0 2px 3px rgba(0, 0, 0, .35)); }
.copyright { height: 62px; background: #151515; color: #aaa; font-size: 11px; line-height: 63px; padding-left: 104.500px; }
.float { position: absolute; left: 20px; }
.call { top: 473.500px; color: #00f; }
.chat { top: 550px; color: green; }
.totop { position: absolute; left: 1284px; top: 550px; width: 50px; height: 50px; background: rgba(0, 0, 0, .1); display: flex; align-items: center; justify-content: center; }
.scroll { width: 17px; background: #f0f0f0; display: flex; flex-direction: column; }
.track { flex: 1; display: flex; flex-direction: column; justify-content: flex-end; }
.thumb { height: 60px; background: #cdcdcd; }
.taskbar { height: 40px; background: #d7d2e1; display: flex; flex: none; color: #111; }
.launch { width: 48px; display: flex; align-items: center; justify-content: center; }
.tasks { width: 828px; padding-left: 3px; display: grid; grid-template-columns: 100px 101px 100px 101px 32px 105px 100px 100px; column-gap: 8.200px; }
.task { display: flex; align-items: center; gap: 4px; padding-left: 4px; border-bottom: 2px solid #4a2cc9; white-space: nowrap; letter-spacing: -.28px; }
.task.active { background: #f0edf4; padding-left: 8px; width: 108px; }
.task.bare { border-color: transparent; padding-left: 6px; }
.task svg { position: relative; top: 1px; }
.tray { display: flex; align-items: center; width: 342px; }
.tray > svg:first-child { margin-left: 4px; }
.temp { font-family: "Noto Sans", sans-serif; font-size: 14px; letter-spacing: -.6px; width: 55px; margin-left: 6px; }
.tray > svg:nth-child(4) { margin-left: 10px; }
.tray > svg:nth-child(5) { margin-left: 7px; }
.tray > svg:nth-child(6) { margin-left: 7px; }
.lang { margin-left: 11px; width: 32px; letter-spacing: -.4px; }
.clock { width: 66px; display: flex; flex-direction: column; align-items: center; line-height: 18px; letter-spacing: -.4px; }
.tray > svg:last-child { margin-left: 14px; }
.peek { border-left: 1px solid #aaa5b4; width: 5px; margin-left: -5px; }
</style>
